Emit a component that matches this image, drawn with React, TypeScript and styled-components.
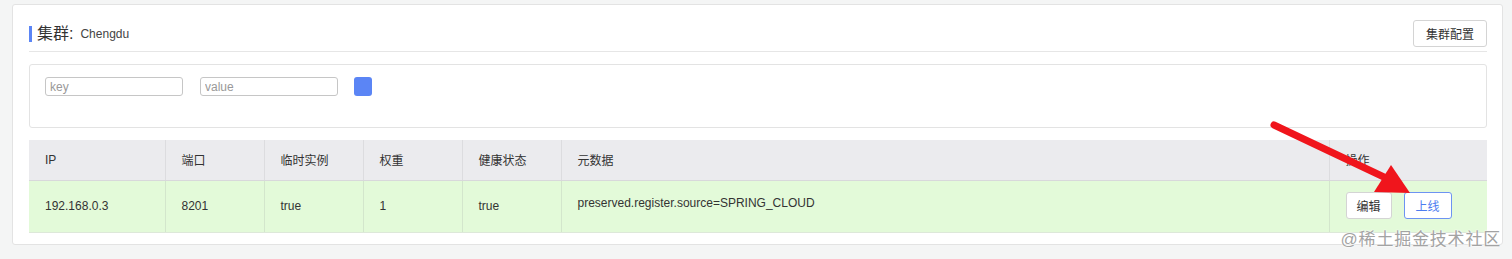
import React from "react";
import styled, { createGlobalStyle } from "styled-components";

const GlobalStyle = createGlobalStyle`
  html, body {
    margin: 0;
    padding: 0;
    background: #f4f5f5;
    font-family: "Liberation Sans", "Noto Sans CJK SC", sans-serif;
    color: #333;
  }
`;

const Page = styled.div`
  position: relative;
  width: 1512px;
  height: 259px;
  padding: 4px 9px 0 12px;
  box-sizing: border-box;
`;

const Card = styled.div`
  box-sizing: border-box;
  height: 241px;
  background: #fff;
  border: 1px solid #e3e3e3;
  border-radius: 3px;
  padding: 15px 15px 11px 16px;
  display: flex;
  flex-direction: column;
`;

const Header = styled.div`
  display: flex;
  align-items: center;
  justify-content: space-between;
  padding-bottom: 4px;
  border-bottom: 1px solid #e6e6e6;
`;

const Title = styled.div`
  display: flex;
  align-items: center;
  border-left: 3px solid #5b85f5;
  padding-left: 5px;
  height: 16px;
  line-height: 16px;

  .label {
    font-size: 16px;
    color: #333;
  }
  .name {
    font-size: 12px;
    color: #444;
    margin-left: 7px;
  }
`;

const Button = styled.button<{ $primary?: boolean; $wide?: boolean }>`
  box-sizing: border-box;
  height: 27px;
  padding: 0 ${(p) => (p.$wide ? "12px" : p.$primary ? "11px" : "10px")};
  background: #fff;
  border: 1px solid ${(p) => (p.$primary ? "#6d93f2" : "#d4d4d4")};
  border-radius: 3px;
  font-family: inherit;
  font-size: 12px;
  color: ${(p) => (p.$primary ? "#4d7cf0" : "#333")};
  cursor: pointer;
`;

const Filter = styled.div`
  box-sizing: border-box;
  margin-top: 12px;
  height: 64px;
  border: 1px solid #e3e3e3;
  border-radius: 3px;
  padding: 12px 15px;
  display: flex;
  align-items: flex-start;
  gap: 16px;
`;

const Input = styled.input`
  box-sizing: border-box;
  width: 138px;
  height: 19px;
  border: 1px solid #c6c6c6;
  border-radius: 3px;
  padding: 0 4px;
  font-family: inherit;
  font-size: 12px;
  outline: none;
  &::placeholder {
    color: #999;
  }
  & + & {
    margin-left: 1px;
  }
`;

const SearchSquare = styled.button`
  width: 18px;
  height: 19px;
  border: none;
  border-radius: 3px;
  background: #5b85f5;
  padding: 0;
`;

const Table = styled.table`
  margin-top: 12px;
  width: 100%;
  border-collapse: collapse;
  table-layout: fixed;
  font-size: 12px;
  color: #333;
`;

const Th = styled.th<{ $w?: number }>`
  width: ${(p) => (p.$w ? `${p.$w}px` : "auto")};
  height: 40px;
  box-sizing: border-box;
  background: #ebebee;
  border-left: 1px solid #dcdcdf;
  border-bottom: 1px solid #d8d8db;
  text-align: left;
  font-weight: normal;
  padding: 0 16px;
  &:first-child {
    border-left: none;
  }
`;

const Td = styled.td<{ $top?: boolean }>`
  height: 52px;
  box-sizing: border-box;
  background: #e3fad9;
  border-left: 1px solid #d3e6cc;
  border-bottom: 1px solid #dde8d9;
  padding: ${(p) => (p.$top ? "15px 16px 0" : "0 16px")};
  vertical-align: ${(p) => (p.$top ? "top" : "middle")};
  &:first-child {
    border-left: none;
  }
`;

const Actions = styled.div`
  display: flex;
  gap: 12px;
  margin-top: -1px;
`;

const Arrow = styled.svg`
  position: absolute;
  left: 0;
  top: 0;
  pointer-events: none;
`;

const Watermark = styled.div`
  position: absolute;
  right: 11px;
  bottom: 9px;
  font-size: 17px;
  color: #a3a3a3;
  letter-spacing: 0.8px;
  text-shadow: 0 0 2px #fff, 0 0 2px #fff;
`;

const columns = [
  { title: "IP", w: 136 },
  { title: "端口", w: 99 },
  { title: "临时实例", w: 99 },
  { title: "权重", w: 99 },
  { title: "健康状态", w: 99 },
  { title: "元数据", w: 768 },
  { title: "操作", w: 0 },
];

export default function App() {
  return (
    <>
      <GlobalStyle />
      <Page>
        <Card>
          <Header>
            <Title>
              <span className="label">集群:</span>
              <span className="name">Chengdu</span>
            </Title>
            <Button $wide>集群配置</Button>
          </Header>
          <Filter>
            <Input placeholder="key" />
            <Input placeholder="value" />
            <SearchSquare />
          </Filter>
          <Table>
            <thead>
              <tr>
                {columns.map((c) => (
                  <Th key={c.title} $w={c.w || undefined}>
                    {c.title}
                  </Th>
                ))}
              </tr>
            </thead>
            <tbody>
              <tr>
                <Td>192.168.0.3</Td>
                <Td>8201</Td>
                <Td>true</Td>
                <Td>1</Td>
                <Td>true</Td>
                <Td $top>preserved.register.source=SPRING_CLOUD</Td>
                <Td>
                  <Actions>
                    <Button>编辑</Button>
                    <Button $primary>上线</Button>
                  </Actions>
                </Td>
              </tr>
            </tbody>
          </Table>
        </Card>
        <Arrow width="1512" height="259" viewBox="0 0 1512 259">
          <line
            x1="1274"
            y1="125"
            x2="1386"
            y2="178"
            stroke="#f0151c"
            strokeWidth="7"
            strokeLinecap="round"
          />
          <polygon points="1410,193 1391,165 1374,192" fill="#f0151c" />
        </Arrow>
        <Watermark>@稀土掘金技术社区</Watermark>
      </Page>
    </>
  );
}
